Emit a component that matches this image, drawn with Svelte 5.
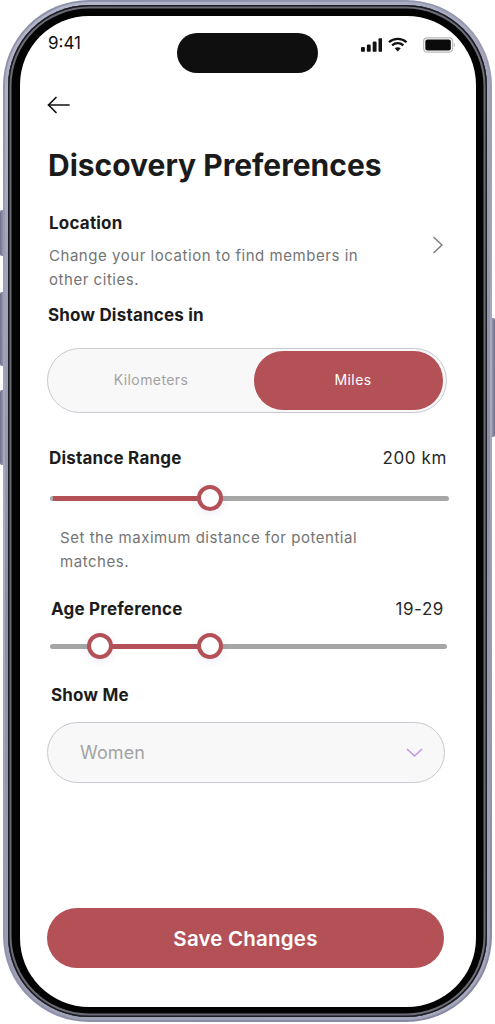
<script lang="ts">
  // Discovery preferences screen inside a phone mockup
  const sides = [
    { cls: 'left', top: 210, height: 46 },
    { cls: 'left', top: 292, height: 74 },
    { cls: 'left', top: 390, height: 75 },
    { cls: 'right', top: 318, height: 119 }
  ];

  const scale = { x0: 50, x1: 449 };
  const pct = (x: number) => ((x - scale.x0) / (scale.x1 - scale.x0)) * 100;
</script>

<div class="device">
  {#each sides as s}
    <span class="side {s.cls}" style="top:{s.top}px; height:{s.height}px"></span>
  {/each}

  <div class="rim">
    <div class="rim-inner">
      <div class="bezel">
        <div class="screen">
          <div class="status">
            <span class="time">9:41</span>
            <span class="island"></span>
            <div class="status-icons">
              <svg class="signal" width="22" height="14" viewBox="0 0 22 14" fill="#111">
                <rect x="0" y="9" width="4" height="5" rx="1.2"/>
                <rect x="6" y="6.5" width="4" height="7.5" rx="1.2"/>
                <rect x="12" y="3.5" width="4" height="10.5" rx="1.2"/>
                <rect x="18" y="0" width="4" height="14" rx="1.2"/>
              </svg>
              <svg class="wifi" width="20" height="15" viewBox="0 0 20 15" fill="none" stroke="#111" stroke-width="2.4">
                <path d="M1 5.2C6 .6 14 .6 19 5.2"/>
                <path d="M4.2 8.4c3.3-3 8.3-3 11.6 0"/>
                <path d="M10 14.6 6.9 11.4c1.8-1.5 4.4-1.5 6.2 0z" fill="#111" stroke="none"/>
              </svg>
              <svg class="battery" width="33" height="16" viewBox="0 0 33 16" fill="none">
                <rect x="0.7" y="0.7" width="29.6" height="14.6" rx="3.6" stroke="#b9b9b9" stroke-width="1.2"/>
                <rect x="2.4" y="2.4" width="26.2" height="11.2" rx="2" fill="#0b0b0b"/>
                <path d="M31.6 5.6c.8.3 1.2 1.2 1.2 2.4s-.4 2.1-1.2 2.4z" fill="#b9b9b9"/>
              </svg>
            </div>
          </div>

          <div class="content">
            <button class="back" aria-label="Back">
              <svg width="23" height="18" viewBox="0 0 23 18" fill="none" stroke="#111" stroke-width="1.7" stroke-linecap="round" stroke-linejoin="round">
                <path d="M22 9H1.5"/>
                <path d="M9 1.5 1.5 9 9 16.5"/>
              </svg>
            </button>

            <h1>Discovery Preferences</h1>

            <div class="location">
              <div class="location-text">
                <h2>Location</h2>
                <p class="hint">Change your location to find members in other cities.</p>
              </div>
              <svg class="chev" width="12" height="18" viewBox="0 0 12 18" fill="none" stroke="#7d7d7d" stroke-width="1.5" stroke-linecap="round" stroke-linejoin="round">
                <path d="M2 1.5 10 9l-8 7.5"/>
              </svg>
            </div>

            <h2 class="distances">Show Distances in</h2>

            <div class="segment">
              <span class="seg-item">Kilometers</span>
              <span class="seg-item active">Miles</span>
            </div>

            <div class="row range-row">
              <h2>Distance Range</h2>
              <span class="value">200 km</span>
            </div>
            <div class="slider one">
              <span class="fill" style="left:{pct(53)}%; width:{pct(210) - pct(53)}%"></span>
              <span class="thumb" style="left:{pct(210)}%"></span>
            </div>
            <p class="hint range-hint">Set the maximum distance for potential matches.</p>

            <div class="row age-row">
              <h2>Age Preference</h2>
              <span class="value">19-29</span>
            </div>
            <div class="slider two">
              <span class="fill" style="left:{pct(100)}%; width:{pct(210) - pct(100)}%"></span>
              <span class="thumb" style="left:{pct(100)}%"></span>
              <span class="thumb" style="left:{pct(210)}%"></span>
            </div>

            <h2 class="showme">Show Me</h2>
            <div class="select">
              <span>Women</span>
              <svg width="17" height="10" viewBox="0 0 17 10" fill="none" stroke="#c39ae8" stroke-width="1.7" stroke-linecap="round" stroke-linejoin="round">
                <path d="M1.5 1.5 8.5 8l7-6.5"/>
              </svg>
            </div>

            <button class="save">Save Changes</button>
          </div>
        </div>
      </div>
    </div>
  </div>
</div>

<style>
  :global(body) {
    margin: 0;
    background: #fff;
    font-family: "Inter", "Open Sans", sans-serif;
  }

  .device {
    position: relative;
    width: 495px;
    height: 1024px;
  }

  .side {
    position: absolute;
    width: 4px;
    background: linear-gradient(90deg, #6f7188, #9fa1b8);
  }
  .side.left { left: 0; border-radius: 2px 0 0 2px; }
  .side.right { right: 0; border-radius: 0 2px 2px 0; background: linear-gradient(90deg, #9fa1b8, #6f7188); }

  .rim {
    position: absolute;
    inset: 0 3px 2px 3px;
    box-sizing: border-box;
    padding: 2px;
    border-radius: 86px;
    background: linear-gradient(160deg, #8d8fa8, #a9abc0 45%, #8587a0);
  }
  .rim-inner {
    height: 100%;
    box-sizing: border-box;
    padding: 3px;
    border-radius: 84px;
    background: linear-gradient(160deg, #b4b6ca, #8d8fa6 50%, #a6a8bd);
  }
  .bezel {
    height: 100%;
    box-sizing: border-box;
    padding: 11px 11px 10px 12px;
    border-radius: 81px;
    background: #030303;
    box-shadow: inset 0 0 0 1.5px #1b1b22, inset 0 0 0 3.5px #6a6b75;
  }
  .screen {
    height: 100%;
    border-radius: 69px;
    background: #fff;
    overflow: hidden;
    display: flex;
    flex-direction: column;
  }

  .status {
    position: relative;
    height: 40px;
    margin-top: 17px;
    flex-shrink: 0;
  }
  .time {
    position: absolute;
    left: 28px;
    top: 0;
    font-size: 17px;
    line-height: 21px;
    font-weight: 400;
    color: #111;
  }
  .island {
    position: absolute;
    left: 157px;
    top: 0;
    width: 141px;
    height: 40px;
    border-radius: 20px;
    background: #0f0f0f;
  }
  .status-icons {
    position: absolute;
    left: 341px;
    top: 4px;
    width: 94px;
    display: flex;
    align-items: flex-start;
  }
  .signal { margin-top: 1px; }
  .wifi { margin-left: 6px; }
  .battery { margin-left: 15px; }

  .content {
    flex: 1;
    display: flex;
    flex-direction: column;
    padding: 0 29px 39px 27px;
    min-height: 0;
  }

  .back {
    align-self: flex-start;
    width: 23px;
    height: 18px;
    margin-top: 23px;
    padding: 0;
    border: 0;
    background: none;
  }

  h1 {
    margin: 33px 0 0 1px;
    font-size: 30px;
    line-height: 36px;
    font-weight: 700;
    color: #1b1b1b;
    white-space: nowrap;
  }
  h2 {
    margin: 0;
    font-size: 17px;
    line-height: 24px;
    font-weight: 700;
    letter-spacing: 0.2px;
    color: #1c1c1c;
    white-space: nowrap;
  }
  .hint {
    margin: 0;
    font-size: 15px;
    line-height: 24px;
    letter-spacing: 0.54px;
    color: #747474;
  }

  .location {
    position: relative;
    margin: 28px 0 0 2px;
  }
  .location-text { width: 330px; }
  .location .hint { margin-top: 9px; }
  .chev {
    position: absolute;
    left: 383px;
    top: 25px;
  }

  .distances { margin: 11px 0 0 1px; }

  .segment {
    display: flex;
    justify-content: space-between;
    box-sizing: border-box;
    height: 65px;
    margin-top: 21px;
    padding: 2px 3px;
    border: 1.5px solid #c9c9d1;
    border-radius: 33px;
    background: #f8f8f8;
  }
  .seg-item {
    box-sizing: border-box;
    width: 189px;
    margin-left: 4px;
    padding-left: 3px;
    text-align: center;
    font-size: 14px;
    letter-spacing: 0.4px;
    line-height: 58px;
    color: #a3a3a3;
  }
  .seg-item.active {
    padding-left: 9px;
    border-radius: 29px;
    background: #b35157;
    color: #fff;
  }

  .row {
    display: flex;
    justify-content: space-between;
    align-items: center;
  }
  .value {
    font-size: 17px;
    line-height: 24px;
    letter-spacing: 0.6px;
    color: #2a2a2a;
  }
  .range-row { margin: 33px 0 0 2px; }
  .age-row { margin: 23px 3px 0 4px; }

  .slider {
    position: relative;
    height: 26px;
    margin-left: 3px;
    margin-right: -2px;
    flex-shrink: 0;
  }
  .slider::before {
    content: "";
    position: absolute;
    left: 0;
    right: 0;
    top: 10.5px;
    height: 5px;
    border-radius: 3px;
    background: #a6a6a6;
  }
  .slider.one { margin-top: 15px; }
  .slider.two { margin-top: 12px; }
  .slider.two::before { right: 2px; }
  .fill {
    position: absolute;
    top: 10.5px;
    height: 5px;
    background: #b35157;
  }
  .thumb {
    position: absolute;
    top: 0;
    width: 26px;
    height: 26px;
    box-sizing: border-box;
    margin-left: -13px;
    border: 4.5px solid #b35157;
    border-radius: 50%;
    background: #fff;
    box-shadow: 0 2px 8px rgba(110, 90, 190, 0.14);
  }

  .range-hint { margin: 15px 60px 0 13px; }

  .showme { margin: 24px 0 0 4px; }

  .select {
    display: flex;
    align-items: center;
    justify-content: space-between;
    box-sizing: border-box;
    width: 398px;
    height: 61px;
    margin-top: 15px;
    padding: 0 21px 0 32px;
    border: 1.5px solid #c9c9d1;
    border-radius: 31px;
    background: #f8f8f8;
    font-size: 18px;
    letter-spacing: 0.1px;
    color: #a3a3a3;
  }

  .save {
    width: 397px;
    height: 60px;
    margin-top: auto;
    padding: 0;
    border: 0;
    border-radius: 30px;
    background: #b35157;
    color: #fff;
    font-family: inherit;
    font-size: 20.5px;
    letter-spacing: 0.2px;
    font-weight: 600;
  }
</style>
